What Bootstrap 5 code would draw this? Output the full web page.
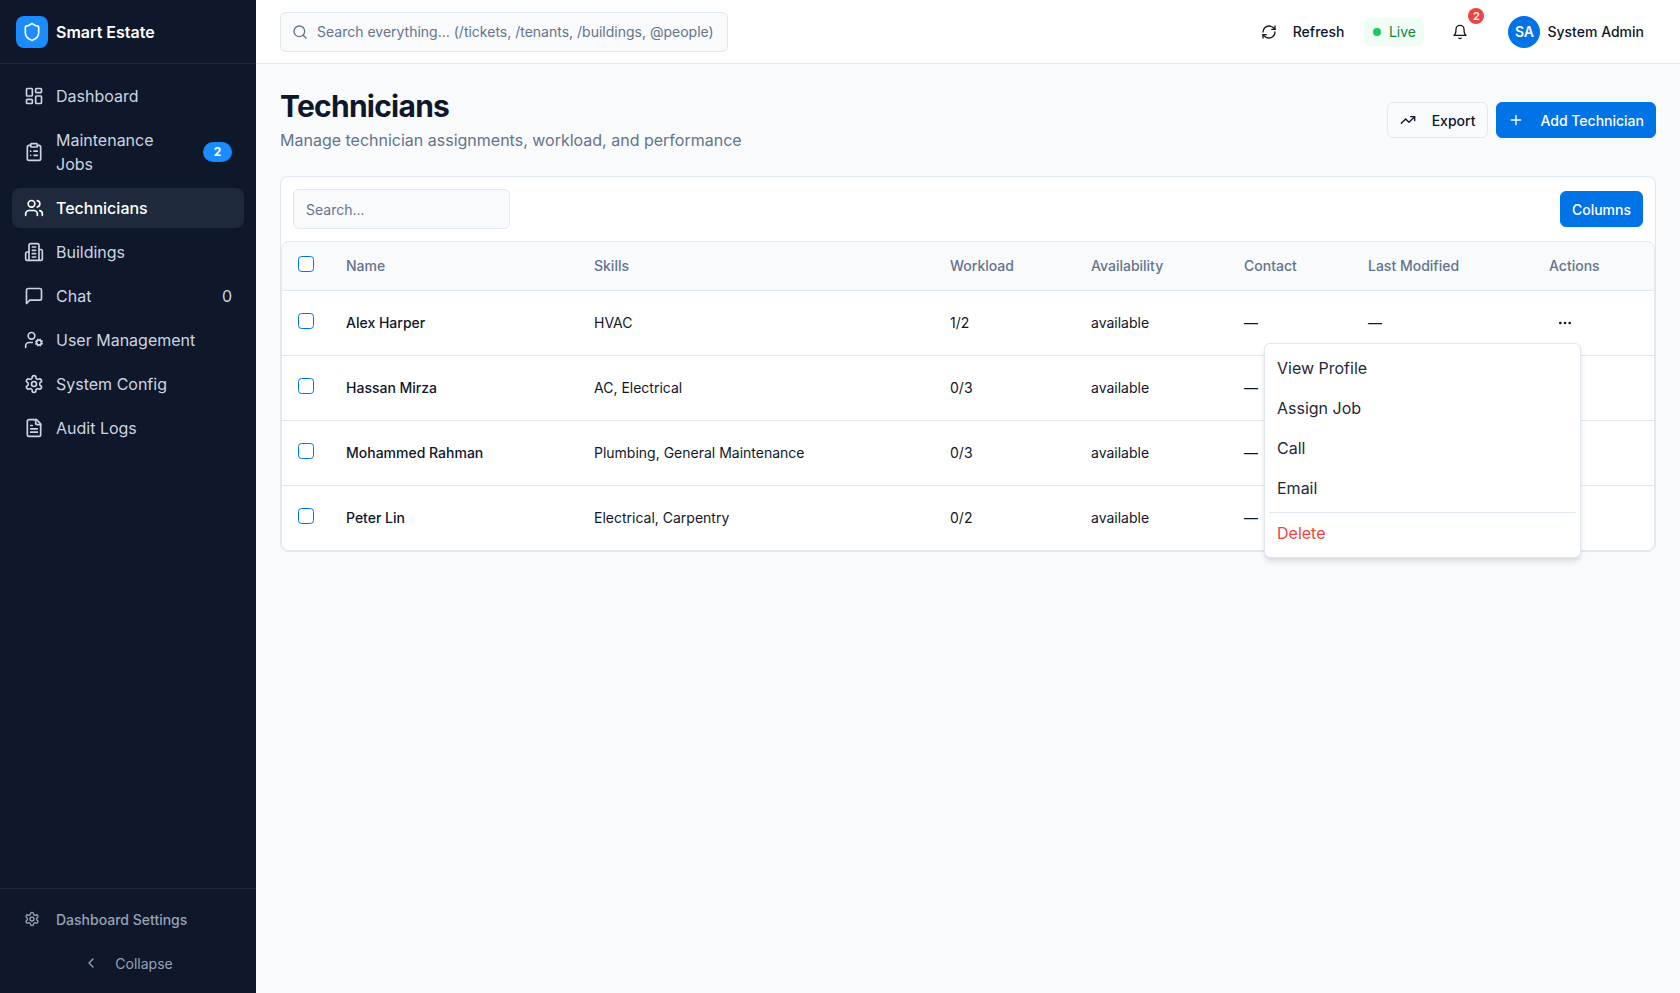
<!DOCTYPE html>
<html lang="en">
<head>
    <meta charset="UTF-8">
    <meta name="viewport" content="width=device-width, initial-scale=1.0">
    <title>Technicians - Smart Estate</title>
    <link href="https://cdn.jsdelivr.net/npm/bootstrap@5.3.0/dist/css/bootstrap.min.css" rel="stylesheet">
    <style>
        body {
            font-family: Inter, "Liberation Sans", sans-serif;
            font-size: 14px;
            color: #0f172a;
            background: #f8fafc;
            height: 100vh;
            overflow: hidden;
        }
        .ico {
            fill: none;
            stroke: currentColor;
            stroke-width: 2;
            stroke-linecap: round;
            stroke-linejoin: round;
            flex-shrink: 0;
        }
        .ico-20 { width: 20px; height: 20px; }
        .ico-16 { width: 16px; height: 16px; }

        /* sidebar */
        .side-shell {
            width: 256px;
            background: #0f172a;
            flex-shrink: 0;
        }
        .side-brand {
            height: 64px;
            padding: 0 16px;
            border-bottom: 1px solid #1e293b;
            color: #fff;
            font-size: 16px;
            font-weight: 600;
        }
        .brand-mark {
            width: 32px;
            height: 32px;
            border-radius: 8px;
            background: #1a8cff;
        }
        .side-nav {
            padding: 12px;
            gap: 4px;
        }
        .side-link {
            padding: 8px 12px;
            gap: 12px;
            border-radius: 8px;
            font-size: 16px;
            line-height: 24px;
            color: #cbd5e1;
            text-decoration: none;
        }
        .side-link.is-current {
            background: #1e293b;
            color: #fff;
            font-weight: 500;
        }
        .side-count {
            background: #1a8cff;
            font-size: 12px;
            font-weight: 700;
            line-height: 16px;
            padding: 2px 0;
            width: 29px;
        }
        .side-foot {
            border-top: 1px solid #1e293b;
            padding: 10px 12px 0;
            height: 105px;
            color: #94a3b8;
            font-size: 14px;
        }
        .foot-row {
            height: 40px;
            padding: 0 12px;
            gap: 16px;
            font-weight: 500;
        }
        .foot-collapse {
            margin-top: 4px;
            gap: 16px;
            height: 40px;
        }

        /* top bar */
        .top-bar {
            height: 64px;
            padding: 0 24px;
            background: #fff;
            border-bottom: 1px solid #e2e8f0;
        }
        .global-search {
            width: 448px;
            height: 40px;
        }
        .global-search .ico {
            left: 12px;
            top: 12px;
            color: #64748b;
        }
        .field-soft {
            height: 40px;
            background: #f8fafc;
            border: 1px solid #e2e8f0;
            border-radius: 6px;
            font-size: 14px;
            color: #0f172a;
        }
        .field-soft::placeholder { color: #64748b; opacity: 1; }
        .global-search .field-soft { padding-left: 36px; }
        .bar-btn {
            height: 36px;
            padding: 0 12px;
            gap: 16px;
            font-size: 14px;
            font-weight: 500;
            color: #0f172a;
            border: 0;
            background: none;
        }
        .live-pill {
            height: 28px;
            width: 60px;
            margin-left: 8px;
            gap: 8px;
            background: #f0fdf4;
            color: #15803d;
            border-radius: 6px;
            justify-content: center;
        }
        .live-dot {
            width: 8px;
            height: 8px;
            border-radius: 50%;
            background: #22c55e;
        }
        .bell-btn {
            width: 40px;
            height: 40px;
            margin-left: 16px;
            margin-right: 16px;
        }
        .bell-count {
            top: -4px;
            left: 28px;
            width: 16px;
            height: 16px;
            border-radius: 50%;
            background: #ef4444;
            color: #fff;
            font-size: 11px;
            font-weight: 600;
            line-height: 16px;
            text-align: center;
        }
        .user-chip {
            padding: 0 12px;
            gap: 7px;
            font-weight: 500;
        }
        .user-avatar {
            width: 32px;
            height: 32px;
            border-radius: 50%;
            background: #0073e6;
            color: #fff;
            font-weight: 600;
        }

        /* page */
        .page-body { padding: 24px; }
        .page-title {
            font-size: 30px;
            font-weight: 700;
            line-height: 36px;
            letter-spacing: -0.75px;
            margin: 0 0 4px;
        }
        .page-sub {
            font-size: 16px;
            line-height: 24px;
            color: #64748b;
            margin: 0;
        }
        .head-row { margin-bottom: 24px; height: 64px; }
        .act-btn {
            height: 36px;
            gap: 16px;
            padding: 0 11px;
            font-size: 14px;
            font-weight: 500;
            border-radius: 6px;
        }
        .act-outline {
            padding: 0 12px;
            background: #f8fafc;
            border: 1px solid #e2e8f0;
            color: #0f172a;
        }
        .act-primary {
            background: #0073e6;
            border: 1px solid #0073e6;
            color: #fff;
        }
        .data-card {
            background: #fff;
            border: 1px solid #e2e8f0;
            border-radius: 8px;
        }
        .card-tools {
            padding: 12px;
            height: 64px;
        }
        .card-tools .field-soft { width: 217px; padding: 0 12px; }
        .data-wrap {
            border: 1px solid #e2e8f0;
            border-radius: 8px;
        }
        .data-table {
            margin: 0;
            table-layout: fixed;
            font-size: 14px;
            border-collapse: separate;
            border-spacing: 0;
            --bs-table-bg: transparent;
            --bs-table-color: #0f172a;
            --bs-table-border-color: #e2e8f0;
        }
        .data-table th {
            height: 49px;
            padding: 0 16px 2px;
            background: #f8fafc;
            color: #64748b;
            font-weight: 500;
            vertical-align: middle;
        }
        .data-table th:first-child { border-top-left-radius: 8px; }
        .data-table th:last-child { border-top-right-radius: 8px; }
        .data-table td {
            height: 65px;
            padding: 0 16px 2px;
            vertical-align: middle;
        }
        .data-table tbody tr:last-child td { border-bottom: 0; height: 64px; }
        .pick-box {
            width: 16px;
            height: 16px;
            margin: 0 0 2px;
            border: 1px solid #0073e6;
            border-radius: 4px;
            display: block;
        }
        .col-pick { width: 48px; }
        .col-name { width: 248px; }
        .col-skills { width: 356px; }
        .col-load { width: 141px; }
        .col-avail { width: 153px; }
        .col-contact { width: 124px; }
        .col-modified { width: 181px; }
        .tech-name { font-weight: 500; }
        .data-table td.row-actions { position: relative; padding-bottom: 0; }
        .more-dots { width: 16px; height: 16px; fill: #0f172a; display: block; }
        .row-menu {
            top: 52px;
            right: 73px;
            width: 317px;
            padding: 4px;
            border: 1px solid #e2e8f0;
            border-radius: 6px;
            box-shadow: 0 4px 6px -1px rgba(15, 23, 42, .12), 0 2px 4px -2px rgba(15, 23, 42, .1);
            font-size: 16px;
        }
        .row-menu .dropdown-item {
            padding: 8px;
            line-height: 24px;
            color: #1e293b;
            border-radius: 4px;
        }
        .row-menu .dropdown-item.item-danger { color: #ef4444; }
        .row-menu .dropdown-divider {
            margin: 4px 0 0;
            border-color: #e2e8f0;
            opacity: 1;
        }
    </style>
</head>
<body>
    <svg width="0" height="0" class="position-absolute">
        <symbol id="i-shield" viewBox="0 0 24 24"><path d="M20 13c0 5-3.5 7.5-7.66 8.95a1 1 0 0 1-.67-.01C7.5 20.5 4 18 4 13V6a1 1 0 0 1 1-1c2 0 4.5-1.2 6.24-2.72a1.17 1.17 0 0 1 1.52 0C14.51 3.81 17 5 19 5a1 1 0 0 1 1 1z"/></symbol>
        <symbol id="i-dash" viewBox="0 0 24 24"><rect width="7" height="9" x="3" y="3" rx="1"/><rect width="7" height="5" x="14" y="3" rx="1"/><rect width="7" height="9" x="14" y="12" rx="1"/><rect width="7" height="5" x="3" y="16" rx="1"/></symbol>
        <symbol id="i-clip" viewBox="0 0 24 24"><rect width="8" height="4" x="8" y="2" rx="1"/><path d="M16 4h2a2 2 0 0 1 2 2v14a2 2 0 0 1-2 2H6a2 2 0 0 1-2-2V6a2 2 0 0 1 2-2h2"/><path d="M12 11h4M12 16h4M8 11h.01M8 16h.01"/></symbol>
        <symbol id="i-users" viewBox="0 0 24 24"><path d="M16 21v-2a4 4 0 0 0-4-4H6a4 4 0 0 0-4 4v2"/><circle cx="9" cy="7" r="4"/><path d="M22 21v-2a4 4 0 0 0-3-3.87"/><path d="M16 3.13a4 4 0 0 1 0 7.75"/></symbol>
        <symbol id="i-build" viewBox="0 0 24 24"><path d="M6 22V4a2 2 0 0 1 2-2h8a2 2 0 0 1 2 2v18Z"/><path d="M6 12H4a2 2 0 0 0-2 2v6a2 2 0 0 0 2 2h2"/><path d="M18 9h2a2 2 0 0 1 2 2v9a2 2 0 0 1-2 2h-2"/><path d="M10 6h4M10 10h4M10 14h4M10 18h4"/></symbol>
        <symbol id="i-chat" viewBox="0 0 24 24"><path d="M21 15a2 2 0 0 1-2 2H7l-4 4V5a2 2 0 0 1 2-2h14a2 2 0 0 1 2 2z"/></symbol>
        <symbol id="i-usercog" viewBox="0 0 24 24"><circle cx="18" cy="15" r="3"/><circle cx="9" cy="7" r="4"/><path d="M10 15H6a4 4 0 0 0-4 4v2"/><path d="m21.7 16.4-.9-.3M15.2 13.9l-.9-.3M16.6 18.7l.3-.9M19.1 12.2l.3-.9M19.6 18.7l-.4-1M16.8 12.3l-.4-1M14.3 16.6l1-.4M20.7 13.8l1-.4"/></symbol>
        <symbol id="i-gear" viewBox="0 0 24 24"><path d="M12.22 2h-.44a2 2 0 0 0-2 2v.18a2 2 0 0 1-1 1.73l-.43.25a2 2 0 0 1-2 0l-.15-.08a2 2 0 0 0-2.73.73l-.22.38a2 2 0 0 0 .73 2.73l.15.1a2 2 0 0 1 1 1.72v.51a2 2 0 0 1-1 1.74l-.15.09a2 2 0 0 0-.73 2.73l.22.38a2 2 0 0 0 2.73.73l.15-.08a2 2 0 0 1 2 0l.43.25a2 2 0 0 1 1 1.73V20a2 2 0 0 0 2 2h.44a2 2 0 0 0 2-2v-.18a2 2 0 0 1 1-1.73l.43-.25a2 2 0 0 1 2 0l.15.08a2 2 0 0 0 2.73-.73l.22-.39a2 2 0 0 0-.73-2.73l-.15-.08a2 2 0 0 1-1-1.74v-.5a2 2 0 0 1 1-1.74l.15-.09a2 2 0 0 0 .73-2.73l-.22-.38a2 2 0 0 0-2.73-.73l-.15.08a2 2 0 0 1-2 0l-.43-.25a2 2 0 0 1-1-1.73V4a2 2 0 0 0-2-2z"/><circle cx="12" cy="12" r="3"/></symbol>
        <symbol id="i-file" viewBox="0 0 24 24"><path d="M15 2H6a2 2 0 0 0-2 2v16a2 2 0 0 0 2 2h12a2 2 0 0 0 2-2V7Z"/><path d="M14 2v4a2 2 0 0 0 2 2h4"/><path d="M10 9H8M16 13H8M16 17H8"/></symbol>
        <symbol id="i-search" viewBox="0 0 24 24"><circle cx="11" cy="11" r="8"/><path d="m21 21-4.3-4.3"/></symbol>
        <symbol id="i-refresh" viewBox="0 0 24 24"><path d="M3 12a9 9 0 0 1 9-9 9.75 9.75 0 0 1 6.74 2.74L21 8"/><path d="M21 3v5h-5"/><path d="M21 12a9 9 0 0 1-9 9 9.75 9.75 0 0 1-6.74-2.74L3 16"/><path d="M8 16H3v5"/></symbol>
        <symbol id="i-bell" viewBox="0 0 24 24"><path d="M6 8a6 6 0 0 1 12 0c0 7 3 9 3 9H3s3-2 3-9"/><path d="M10.3 21a1.94 1.94 0 0 0 3.4 0"/></symbol>
        <symbol id="i-trend" viewBox="0 0 24 24"><path d="M22 7 13.5 15.5 8.5 10.5 2 17"/><path d="M16 7h6v6"/></symbol>
        <symbol id="i-plus" viewBox="0 0 24 24"><path d="M5 12h14M12 5v14"/></symbol>
        <symbol id="i-left" viewBox="0 0 24 24"><path d="m15 18-6-6 6-6"/></symbol>
        <symbol id="i-dots" viewBox="0 0 24 24"><circle cx="5" cy="12" r="2"/><circle cx="12" cy="12" r="2"/><circle cx="19" cy="12" r="2"/></symbol>
    </svg>

    <div class="d-flex vh-100">
        <!-- Sidebar -->
        <aside class="side-shell d-flex flex-column">
            <div class="side-brand d-flex align-items-center gap-2">
                <span class="brand-mark d-flex align-items-center justify-content-center">
                    <svg class="ico ico-20"><use href="#i-shield"/></svg>
                </span>
                <span>Smart Estate</span>
            </div>
            <nav class="side-nav d-flex flex-column flex-grow-1">
                <a href="#" class="side-link d-flex align-items-center"><svg class="ico ico-20"><use href="#i-dash"/></svg><span>Dashboard</span></a>
                <a href="#" class="side-link d-flex align-items-center">
                    <svg class="ico ico-20"><use href="#i-clip"/></svg>
                    <span class="flex-grow-1">Maintenance<br>Jobs</span>
                    <span class="badge rounded-pill side-count">2</span>
                </a>
                <a href="#" class="side-link is-current d-flex align-items-center"><svg class="ico ico-20"><use href="#i-users"/></svg><span>Technicians</span></a>
                <a href="#" class="side-link d-flex align-items-center"><svg class="ico ico-20"><use href="#i-build"/></svg><span>Buildings</span></a>
                <a href="#" class="side-link d-flex align-items-center">
                    <svg class="ico ico-20"><use href="#i-chat"/></svg>
                    <span class="flex-grow-1">Chat</span>
                    <span>0</span>
                </a>
                <a href="#" class="side-link d-flex align-items-center"><svg class="ico ico-20"><use href="#i-usercog"/></svg><span>User Management</span></a>
                <a href="#" class="side-link d-flex align-items-center"><svg class="ico ico-20"><use href="#i-gear"/></svg><span>System Config</span></a>
                <a href="#" class="side-link d-flex align-items-center"><svg class="ico ico-20"><use href="#i-file"/></svg><span>Audit Logs</span></a>
            </nav>
            <div class="side-foot">
                <div class="foot-row d-flex align-items-center"><svg class="ico ico-16"><use href="#i-gear"/></svg><span>Dashboard Settings</span></div>
                <div class="foot-collapse d-flex align-items-center justify-content-center"><svg class="ico ico-16"><use href="#i-left"/></svg><span>Collapse</span></div>
            </div>
        </aside>

        <div class="flex-grow-1 d-flex flex-column">
            <!-- Top bar -->
            <header class="top-bar d-flex align-items-center justify-content-between">
                <div class="global-search position-relative">
                    <svg class="ico ico-16 position-absolute"><use href="#i-search"/></svg>
                    <input type="text" class="form-control field-soft" placeholder="Search everything... (/tickets, /tenants, /buildings, @people)">
                </div>
                <div class="d-flex align-items-center">
                    <button class="bar-btn d-flex align-items-center"><svg class="ico ico-16"><use href="#i-refresh"/></svg>Refresh</button>
                    <span class="live-pill d-flex align-items-center"><span class="live-dot"></span>Live</span>
                    <span class="bell-btn position-relative d-flex align-items-center justify-content-center">
                        <svg class="ico ico-16"><use href="#i-bell"/></svg>
                        <span class="bell-count position-absolute">2</span>
                    </span>
                    <span class="user-chip d-flex align-items-center">
                        <span class="user-avatar d-flex align-items-center justify-content-center">SA</span>
                        System Admin
                    </span>
                </div>
            </header>

            <main class="page-body flex-grow-1">
                <div class="head-row d-flex justify-content-between align-items-center">
                    <div>
                        <h1 class="page-title">Technicians</h1>
                        <p class="page-sub">Manage technician assignments, workload, and performance</p>
                    </div>
                    <div class="d-flex gap-2">
                        <button class="act-btn act-outline d-flex align-items-center"><svg class="ico ico-16"><use href="#i-trend"/></svg>Export</button>
                        <button class="act-btn act-primary d-flex align-items-center"><svg class="ico ico-16"><use href="#i-plus"/></svg>Add Technician</button>
                    </div>
                </div>

                <div class="data-card">
                    <div class="card-tools d-flex justify-content-between align-items-center">
                        <input type="text" class="form-control field-soft" placeholder="Search...">
                        <button class="act-btn act-primary d-flex align-items-center">Columns</button>
                    </div>
                    <div class="data-wrap">
                        <table class="table data-table">
                            <colgroup>
                                <col class="col-pick"><col class="col-name"><col class="col-skills"><col class="col-load"><col class="col-avail"><col class="col-contact"><col class="col-modified"><col>
                            </colgroup>
                            <thead>
                                <tr>
                                    <th><input class="form-check-input pick-box" type="checkbox" aria-label="Select all"></th>
                                    <th>Name</th>
                                    <th>Skills</th>
                                    <th>Workload</th>
                                    <th>Availability</th>
                                    <th>Contact</th>
                                    <th>Last Modified</th>
                                    <th>Actions</th>
                                </tr>
                            </thead>
                            <tbody>
                                <tr>
                                    <td><input class="form-check-input pick-box" type="checkbox" aria-label="Select row"></td>
                                    <td class="tech-name">Alex Harper</td>
                                    <td>HVAC</td>
                                    <td>1/2</td>
                                    <td>available</td>
                                    <td>—</td>
                                    <td>—</td>
                                    <td class="row-actions">
                                        <svg class="more-dots ms-2"><use href="#i-dots"/></svg>
                                        <ul class="dropdown-menu show row-menu">
                                            <li><a class="dropdown-item" href="#">View Profile</a></li>
                                            <li><a class="dropdown-item" href="#">Assign Job</a></li>
                                            <li><a class="dropdown-item" href="#">Call</a></li>
                                            <li><a class="dropdown-item" href="#">Email</a></li>
                                            <li><hr class="dropdown-divider"></li>
                                            <li><a class="dropdown-item item-danger" href="#">Delete</a></li>
                                        </ul>
                                    </td>
                                </tr>
                                <tr>
                                    <td><input class="form-check-input pick-box" type="checkbox" aria-label="Select row"></td>
                                    <td class="tech-name">Hassan Mirza</td>
                                    <td>AC, Electrical</td>
                                    <td>0/3</td>
                                    <td>available</td>
                                    <td>—</td>
                                    <td>—</td>
                                    <td></td>
                                </tr>
                                <tr>
                                    <td><input class="form-check-input pick-box" type="checkbox" aria-label="Select row"></td>
                                    <td class="tech-name">Mohammed Rahman</td>
                                    <td>Plumbing, General Maintenance</td>
                                    <td>0/3</td>
                                    <td>available</td>
                                    <td>—</td>
                                    <td>—</td>
                                    <td></td>
                                </tr>
                                <tr>
                                    <td><input class="form-check-input pick-box" type="checkbox" aria-label="Select row"></td>
                                    <td class="tech-name">Peter Lin</td>
                                    <td>Electrical, Carpentry</td>
                                    <td>0/2</td>
                                    <td>available</td>
                                    <td>—</td>
                                    <td>—</td>
                                    <td></td>
                                </tr>
                            </tbody>
                        </table>
                    </div>
                </div>
            </main>
        </div>
    </div>
    <script src="https://cdn.jsdelivr.net/npm/bootstrap@5.3.0/dist/js/bootstrap.bundle.min.js"></script>
</body>
</html>
